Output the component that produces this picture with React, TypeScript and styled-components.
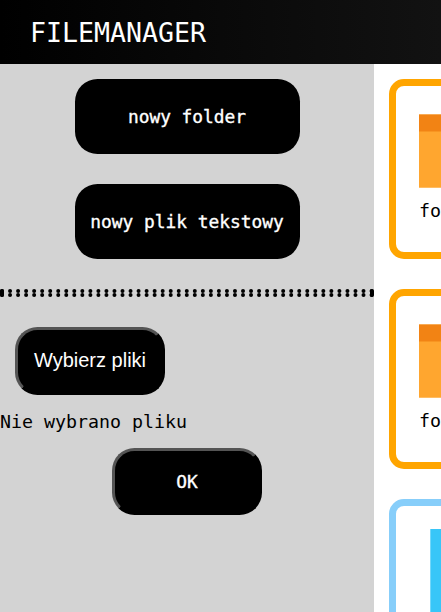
import React from "react";
import styled, { createGlobalStyle } from "styled-components";

const GlobalStyle = createGlobalStyle`
  body {
    margin: 0;
    overflow: hidden;
    background: #fff;
    color: #000;
    font: 18.27px/22px "DejaVu Sans Mono", monospace;
  }
  * { box-sizing: border-box; }
`;

const Page = styled.div`
  height: 612px;
  width: 100%;
  overflow: hidden;
  display: flex;
  flex-direction: column;
`;

const Header = styled.header`
  flex: none;
  height: 64px;
  padding: 2px 0 0 30px;
  display: flex;
  align-items: center;
  background: linear-gradient(to right, #000, #121212);
`;

const Title = styled.h1`
  margin: 0;
  color: #fff;
  font-size: 26.6px;
  font-weight: 400;
  line-height: 32px;
`;

const Body = styled.div`
  flex: 1;
  min-height: 0;
  display: flex;
`;

const Sidebar = styled.aside`
  flex: none;
  width: 374px;
  padding-top: 15px;
  background: #d3d3d3;
  display: flex;
  flex-direction: column;
  align-items: center;
`;

const CreateButton = styled.button`
  width: 225px;
  height: 75px;
  margin: 0 0 30px;
  padding: 0;
  border: 0;
  border-radius: 22.5px;
  background: #000;
  color: #fff;
  font: 17.85px/22px "DejaVu Sans Mono", monospace;
  -webkit-text-stroke: 0.35px #fff;
  white-space: nowrap;
`;

const Divider = styled.hr`
  flex: none;
  width: 100%;
  height: 8px;
  margin: 0 0 30px;
  border: 4px dotted #000;
`;

const FormButton = styled.button<{ $sans?: boolean }>`
  width: 150px;
  height: ${(p) => (p.$sans ? 68 : 67)}px;
  margin: ${(p) => (p.$sans ? "0 0 0 15px" : "0")};
  padding: ${(p) => (p.$sans ? "0 0 2px" : "0")};
  align-self: ${(p) => (p.$sans ? "flex-start" : "center")};
  border: 3px outset #000;
  border-radius: 22.5px;
  background: #000;
  color: #fff;
  -webkit-text-stroke: ${(p) => (p.$sans ? "0" : "0.35px #fff")};
  font: ${(p) =>
    p.$sans
      ? '20px/22px "Liberation Sans", Arial, sans-serif'
      : '17.85px/22px "DejaVu Sans Mono", monospace'};
`;

const FileStatus = styled.p`
  align-self: flex-start;
  margin: 16px 0 15px;
`;

const Content = styled.main`
  flex: 1;
  min-width: 0;
  overflow: hidden;
  padding: 15px 0 0 15px;
  display: flex;
  flex-direction: column;
  gap: 30px;
`;

const Card = styled.article<{ $color: string }>`
  flex: none;
  width: 180px;
  height: 180px;
  padding: 23px;
  border: 7px solid ${(p) => p.$color};
  border-radius: 15px;
`;

const Icon = styled.svg`
  display: block;
  width: 90px;
  height: 90px;
`;

const Name = styled.div`
  white-space: nowrap;
  margin-top: 1px;
`;

const FolderIcon = () => (
  <Icon viewBox="0 0 90 90">
    <path d="M0 5.5h90v73.3H0z" fill="#ffa62f" />
    <path d="M0 5.5h90v17H0z" fill="#f28314" />
  </Icon>
);

const FileIcon = () => (
  <Icon viewBox="0 0 90 90">
    <path d="M11.3 0H58l21 21v69H11.3z" fill="#38c6f8" />
  </Icon>
);

const folders = ["folder1", "folder2"];

export default function App() {
  return (
    <Page>
      <GlobalStyle />
      <Header>
        <Title>FILEMANAGER</Title>
      </Header>
      <Body>
        <Sidebar>
          <CreateButton>nowy folder</CreateButton>
          <CreateButton>nowy plik tekstowy</CreateButton>
          <Divider />
          <FormButton $sans>Wybierz pliki</FormButton>
          <FileStatus>Nie wybrano pliku</FileStatus>
          <FormButton>OK</FormButton>
        </Sidebar>
        <Content>
          {folders.map((name) => (
            <Card key={name} $color="#ffa500">
              <FolderIcon />
              <Name>{name}</Name>
            </Card>
          ))}
          <Card $color="#87cefa">
            <FileIcon />
          </Card>
        </Content>
      </Body>
    </Page>
  );
}
